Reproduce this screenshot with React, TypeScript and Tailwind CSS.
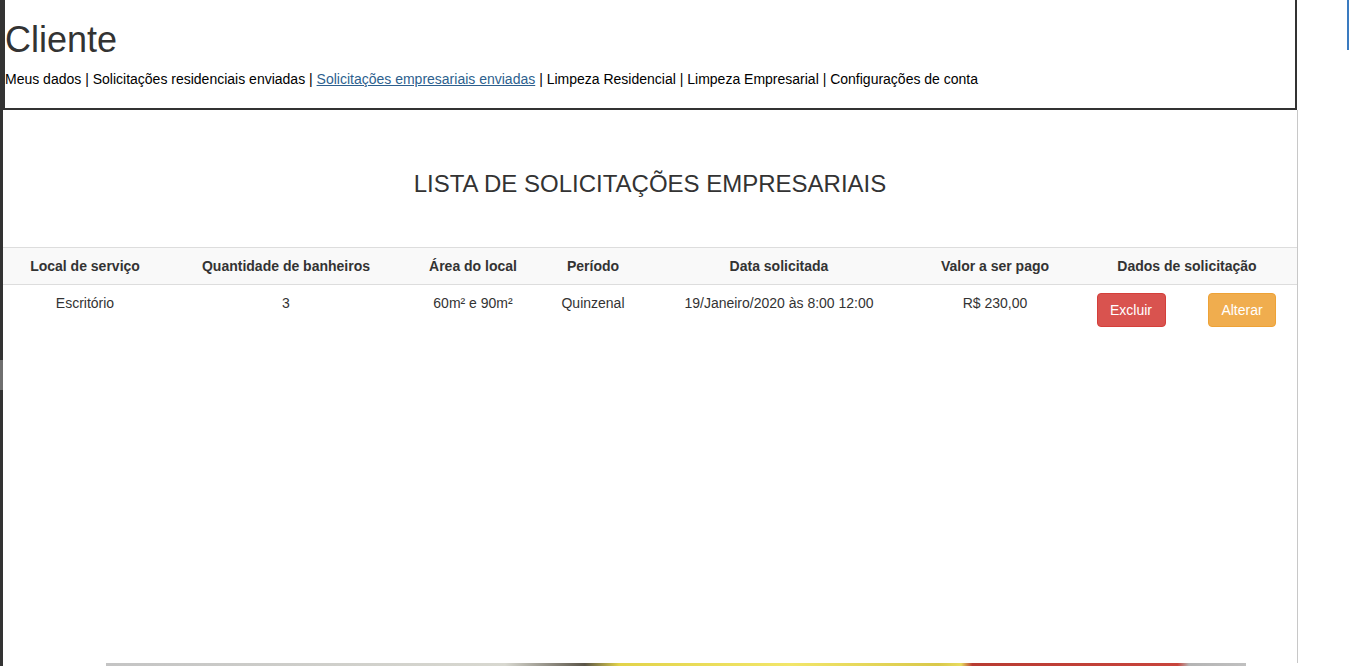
import React from 'react';

const columns = [
  { label: 'Local de serviço', w: 'w-[164px]' },
  { label: 'Quantidade de banheiros', w: 'w-[238px]' },
  { label: 'Área do local', w: 'w-[136px]' },
  { label: 'Período', w: 'w-[104px]' },
  { label: 'Data solicitada', w: 'w-[268px]' },
  { label: 'Valor a ser pago', w: 'w-[164px]' },
];

const row = ['Escritório', '3', '60m² e 90m²', 'Quinzenal', '19/Janeiro/2020 às 8:00 12:00', 'R$ 230,00'];

export default function App() {
  return (
    <div className="flex h-[666px] overflow-hidden bg-white font-['Liberation_Sans',Arial,sans-serif] text-[14px] leading-5 text-[#333]">
      {/* left window edge */}
      <div className="flex w-[3px] flex-col bg-[#333]">
        <div className="h-[360px]" />
        <div className="h-[30px] bg-[#6f6f6f]" />
      </div>

      <div className="flex w-[1295px] flex-col">
        <header className="mr-[1px] h-[110px] border-x-2 border-b-2 border-[#333] pt-5">
          <h1 className="text-[36px] leading-[40px] text-[#333]">Cliente</h1>
          <nav className="mt-[9px] text-black">
            Meus dados | Solicitações residenciais enviadas |{' '}
            <a href="#" className="text-[#2d5f8e] underline">Solicitações empresariais enviadas</a>{' '}
            | Limpeza Residencial | Limpeza Empresarial | Configurações de conta
          </nav>
        </header>

        <main className="h-[553px] border-r border-[#c8c8c8]">
          <h3 className="mt-[61px] text-center text-[24px] leading-[26px] text-[#333]">
            LISTA DE SOLICITAÇÕES EMPRESARIAIS
          </h3>

          <table className="mt-[50px] w-[1294px] table-fixed border-collapse">
            <thead>
              <tr className="border-t border-[#ddd] bg-[#f9f9f9]">
                {columns.map((c) => (
                  <th key={c.label} className={`${c.w} border-b border-[#ddd] p-2 text-center font-bold`}>
                    {c.label}
                  </th>
                ))}
                <th colSpan={2} className="border-b border-[#ddd] p-2 text-center font-bold">
                  Dados de solicitação
                </th>
              </tr>
            </thead>
            <tbody>
              <tr>
                {row.map((v, i) => (
                  <td key={i} className="p-2 text-center align-top">{v}</td>
                ))}
                <td className="w-[108px] p-2 text-center align-top">
                  <button className="-ml-[2px] h-[34px] w-[69px] rounded border border-[#d43f3a] bg-[#d9534f] text-white">Excluir</button>
                </td>
                <td className="w-[112px] p-2 text-center align-top">
                  <button className="h-[34px] w-[68px] rounded border border-[#eea236] bg-[#f0ad4e] text-white">Alterar</button>
                </td>
              </tr>
            </tbody>
          </table>
        </main>

        <div className="ml-[103px] h-[3px] w-[1140px] bg-[linear-gradient(90deg,#c4c4c4_0%,#d8d8d0_35%,#5a5448_42%,#e2d34a_45%,#f2e66a_60%,#d9c84a_73%,#e8dc60_75%,#b83b32_76%,#c8443c_94%,#b4b4b4_95%,#c0c0c0_100%)]" />
      </div>

      <div className="flex flex-1 justify-end">
        <div className="h-[50px] w-[2px] bg-[#3a7bc0]" />
      </div>
    </div>
  );
}
